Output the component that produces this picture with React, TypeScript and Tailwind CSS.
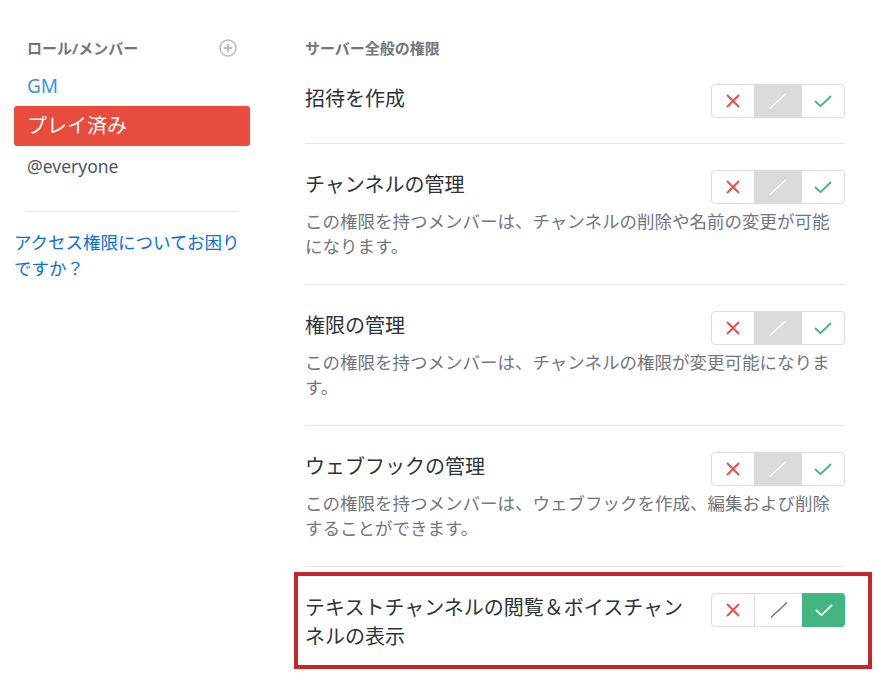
import React from 'react';

type Perm = {
  title: string;
  desc?: string;
  state: 'deny' | 'neutral' | 'allow';
  highlight?: boolean;
};

const perms: Perm[] = [
  { title: '招待を作成', state: 'neutral' },
  {
    title: 'チャンネルの管理',
    desc: 'この権限を持つメンバーは、チャンネルの削除や名前の変更が可能になります。',
    state: 'neutral',
  },
  {
    title: '権限の管理',
    desc: 'この権限を持つメンバーは、チャンネルの権限が変更可能になります。',
    state: 'neutral',
  },
  {
    title: 'ウェブフックの管理',
    desc: 'この権限を持つメンバーは、ウェブフックを作成、編集および削除することができます。',
    state: 'neutral',
  },
  { title: 'テキストチャンネルの閲覧＆ボイスチャンネルの表示', state: 'allow', highlight: true },
];

const PermToggle: React.FC<{ state: Perm['state'] }> = ({ state }) => {
  const allow = state === 'allow';
  return (
    <div className="flex h-[34px] w-[134px] shrink-0 rounded-[4px] border border-[#dcddde] bg-white">
      <div className="flex w-[42px] items-center justify-center">
        <svg width="14" height="14" viewBox="0 0 14 14">
          <path d="M1.5 1.5 L12.5 12.5 M12.5 1.5 L1.5 12.5" stroke="#f04747" strokeWidth="1.8" strokeLinecap="round" />
        </svg>
      </div>
      <div
        className={
          allow
            ? 'flex w-[48px] items-center justify-center border-l border-[#dcddde] bg-white'
            : 'flex w-[48px] items-center justify-center bg-[#dadbdc]'
        }
      >
        <svg width="18" height="16" viewBox="0 0 18 16">
          <path d="M1.5 15 L16.5 1" stroke={allow ? '#72767d' : '#ffffff'} strokeWidth="1.5" strokeLinecap="round" />
        </svg>
      </div>
      <div
        className={
          allow
            ? '-my-px -mr-px flex w-[43px] items-center justify-center rounded-r-[4px] bg-[#43b581]'
            : 'flex w-[42px] items-center justify-center'
        }
      >
        <svg width="18" height="13" viewBox="0 0 18 13">
          <path
            d="M1.5 6.5 L6.5 11.2 L16.5 1.5"
            fill="none"
            stroke={allow ? '#ffffff' : '#43b581'}
            strokeWidth="1.8"
            strokeLinecap="round"
            strokeLinejoin="round"
          />
        </svg>
      </div>
    </div>
  );
};

export default function App() {
  return (
    <div
      className="flex h-[678px] w-[875px] overflow-hidden bg-white"
      style={{ fontFamily: '"Noto Sans", "Noto Sans CJK JP", sans-serif' }}
    >
      {/* sidebar */}
      <aside className="ml-[14px] w-[236px] shrink-0 pt-[38px]">
        <div className="flex h-5 items-center justify-between pl-[13px] pr-[13px]">
          <span className="text-[15px] font-bold leading-5 text-[#72767d]">ロール/メンバー</span>
          <svg width="18" height="18" viewBox="0 0 18 18">
            <circle cx="9" cy="9" r="8" fill="none" stroke="#b9bbbe" strokeWidth="1.5" />
            <path d="M9 5 V13 M5 9 H13" stroke="#b9bbbe" strokeWidth="1.8" />
          </svg>
        </div>
        <div className="mt-2 flex h-10 items-center pl-[13px] text-[19px] text-[#3498db]">GM</div>
        <div className="flex h-10 items-center rounded-[3px] bg-[#e74c3c] pl-[13px] text-[20px] text-white">
          プレイ済み
        </div>
        <div className="flex h-10 items-center pl-[13px] text-[17.5px] text-[#4f545c]">@everyone</div>
        <div className="mx-[12px] mt-[25px] border-t border-[#e3e5e8]" />
        <a className="mt-[17px] block text-[17.5px] leading-[26px] text-[#0a6fd8]">
          アクセス権限についてお困りですか？
        </a>
      </aside>

      {/* permissions */}
      <main className="ml-[55px] w-[540px] shrink-0 pt-[38px]">
        <div className="h-5 text-[15px] font-bold leading-5 text-[#72767d]">サーバー全般の権限</div>
        {perms.map((p) => (
          <div
            key={p.title}
            className={
              p.highlight
                ? 'relative pt-[26px] pb-[25px]'
                : 'relative border-b border-[#e3e5e8] pt-[26px] pb-[25px]'
            }
          >
            <div className="flex items-start justify-between gap-5">
              <div className="flex-1 text-[20px] leading-[29px] text-[#2e3338]">{p.title}</div>
              <PermToggle state={p.state} />
            </div>
            {p.desc && <p className="mt-[5px] text-[17.5px] leading-[25px] text-[#72767d]">{p.desc}</p>}
            {p.highlight && (
              <div className="pointer-events-none absolute left-[-11px] top-[5px] h-[97px] w-[578px] border-4 border-[#c9252b]" />
            )}
          </div>
        ))}
      </main>
    </div>
  );
}
